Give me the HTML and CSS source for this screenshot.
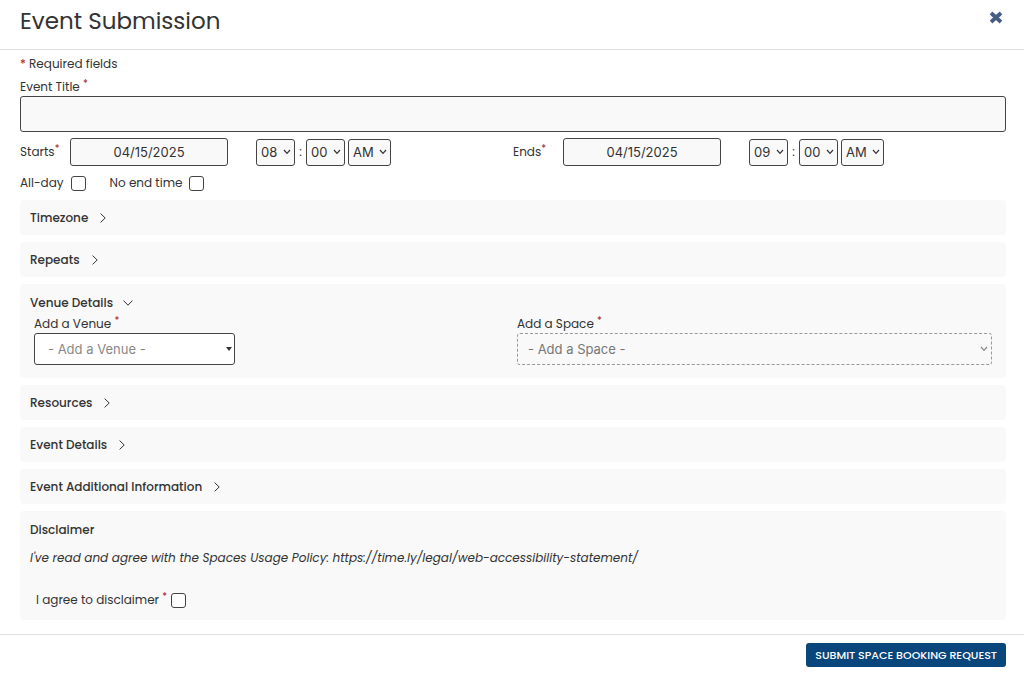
FILE: index.html
```html
<!doctype html>
<html lang="en">

<head>
	<meta charset="utf-8">
	<meta name="viewport" content="width=device-width, initial-scale=1">
	<title>Event Submission</title>
	<link rel="stylesheet" href="styles.css">
</head>

<body>
	<header class="header">
		<h1>Event Submission</h1>
		<button type="button" class="close" aria-label="Close">
			<svg width="12" height="12" viewBox="0 0 12 12"><path d="M2 2.4 L10 9.6 M10 2.4 L2 9.6" /></svg>
		</button>
	</header>

	<form class="form">
		<div class="content">
			<p class="required-note"><span class="star">*</span> Required fields</p>

			<label class="label title-label" for="title">Event Title <sup>*</sup></label>
			<input class="title-input" type="text" id="title" required>

			<!-- start and end date -->
			<div class="dates">
				<div class="date-row">
					<label class="label" for="start-date">Starts<sup>*</sup></label>
					<input class="date" type="text" id="start-date" value="04/15/2025">
					<div class="time">
						<div class="select">
							<select aria-label="Start hour"><option>08</option></select>
							<svg class="arrow" width="8" height="6" viewBox="0 0 8 6"><path d="M1 1 L4 4.3 L7 1" /></svg>
						</div>
						<span class="colon">:</span>
						<div class="select">
							<select aria-label="Start minute"><option>00</option></select>
							<svg class="arrow" width="8" height="6" viewBox="0 0 8 6"><path d="M1 1 L4 4.3 L7 1" /></svg>
						</div>
						<div class="select ampm">
							<select aria-label="Start AM or PM"><option>AM</option><option>PM</option></select>
							<svg class="arrow" width="8" height="6" viewBox="0 0 8 6"><path d="M1 1 L4 4.3 L7 1" /></svg>
						</div>
					</div>
				</div>
				<div class="date-row">
					<label class="label" for="end-date">Ends<sup>*</sup></label>
					<input class="date" type="text" id="end-date" value="04/15/2025">
					<div class="time">
						<div class="select">
							<select aria-label="End hour"><option>09</option></select>
							<svg class="arrow" width="8" height="6" viewBox="0 0 8 6"><path d="M1 1 L4 4.3 L7 1" /></svg>
						</div>
						<span class="colon">:</span>
						<div class="select">
							<select aria-label="End minute"><option>00</option></select>
							<svg class="arrow" width="8" height="6" viewBox="0 0 8 6"><path d="M1 1 L4 4.3 L7 1" /></svg>
						</div>
						<div class="select ampm">
							<select aria-label="End AM or PM"><option>AM</option><option>PM</option></select>
							<svg class="arrow" width="8" height="6" viewBox="0 0 8 6"><path d="M1 1 L4 4.3 L7 1" /></svg>
						</div>
					</div>
				</div>
			</div>

			<div class="checks">
				<div class="check">
					<label class="label" for="all-day">All-day</label>
					<input type="checkbox" id="all-day">
				</div>
				<div class="check">
					<label class="label" for="no-end">No end time</label>
					<input type="checkbox" id="no-end">
				</div>
			</div>

			<!-- collapsible sections -->
			<div class="panels">
				<section class="panel">
					<button type="button" class="toggle" aria-expanded="false">Timezone
						<svg width="6" height="10" viewBox="0 0 6 10"><path d="M.6 .6 L5.2 5 L.6 9.4" /></svg>
					</button>
				</section>
				<section class="panel">
					<button type="button" class="toggle" aria-expanded="false">Repeats
						<svg width="6" height="10" viewBox="0 0 6 10"><path d="M.6 .6 L5.2 5 L.6 9.4" /></svg>
					</button>
				</section>
				<section class="panel">
					<button type="button" class="toggle open" aria-expanded="true">Venue Details
						<svg width="10" height="6" viewBox="0 0 10 6"><path d="M.6 .6 L5 5.2 L9.4 .6" /></svg>
					</button>
					<div class="venue">
						<div>
							<label class="label" for="venue">Add a Venue <sup>*</sup></label>
							<div class="select venue-select">
								<select id="venue"><option>- Add a Venue -</option></select>
								<svg class="arrow" width="6" height="4" viewBox="0 0 6 4"><path d="M0 0 H6 L3 4 Z" /></svg>
							</div>
						</div>
						<div>
							<label class="label" for="space">Add a Space <sup>*</sup></label>
							<div class="select space-select">
								<select id="space" disabled><option>- Add a Space -</option></select>
								<svg class="arrow" width="8" height="6" viewBox="0 0 8 6"><path d="M1 1 L4 4.3 L7 1" /></svg>
							</div>
						</div>
					</div>
				</section>
				<section class="panel">
					<button type="button" class="toggle" aria-expanded="false">Resources
						<svg width="6" height="10" viewBox="0 0 6 10"><path d="M.6 .6 L5.2 5 L.6 9.4" /></svg>
					</button>
				</section>
				<section class="panel">
					<button type="button" class="toggle" aria-expanded="false">Event Details
						<svg width="6" height="10" viewBox="0 0 6 10"><path d="M.6 .6 L5.2 5 L.6 9.4" /></svg>
					</button>
				</section>
				<section class="panel">
					<button type="button" class="toggle" aria-expanded="false">Event Additional Information
						<svg width="6" height="10" viewBox="0 0 6 10"><path d="M.6 .6 L5.2 5 L.6 9.4" /></svg>
					</button>
				</section>
				<section class="panel">
					<h2>Disclaimer</h2>
					<p class="policy">I've read and agree with the Spaces Usage Policy: https://time.ly/legal/web-accessibility-statement/</p>
					<div class="agree">
						<label class="label" for="agree">I agree to disclaimer <sup>*</sup></label>
						<input type="checkbox" id="agree" required>
					</div>
				</section>
			</div>
		</div>

		<footer class="footer">
			<button type="submit" class="submit">SUBMIT SPACE BOOKING REQUEST</button>
		</footer>
	</form>
</body>

</html>
```
FILE: styles.css
```css
* {
	box-sizing: border-box;
}

body {
	margin: 0;
	background: #fff;
	color: #333;
	font-family: Poppins, Inter, sans-serif;
	font-size: 12px;
	line-height: 18px;
}

h1, h2, p {
	margin: 0;
}

button, input, select {
	font-family: inherit;
	color: inherit;
}

/* header */
.header {
	display: flex;
	justify-content: space-between;
	align-items: flex-start;
	height: 50px;
	padding: 5px 20px 0;
	border-bottom: 1px solid #ddd;
}

.header h1 {
	font-size: 23px;
	font-weight: 400;
	line-height: 32px;
}

.close {
	display: flex;
	margin-top: 5px;
	padding: 0;
	border: 0;
	background: none;
	cursor: pointer;
}

.close svg {
	width: 16px;
	height: 15px;
}

.close path {
	stroke: #455c85;
	stroke-width: 3;
}

svg path {
	fill: none;
	stroke: #333;
}

.content {
	padding: 5px 18px 14px 20px;
}

.star, sup {
	color: #a3142b;
}

sup {
	font-size: 10px;
	line-height: 0;
	vertical-align: 4px;
}

.label {
	white-space: nowrap;
}

.required-note {
	margin-bottom: 5px;
}

.title-label {
	display: block;
}

.title-input {
	display: block;
	width: 100%;
	height: 36px;
	padding: 0 10px;
	border: 1px solid #444;
	border-radius: 3px;
	background: #f9f9f9;
	font-size: 13px;
}

/* dates */
.dates {
	display: grid;
	grid-template-columns: 1fr 1fr;
	margin-top: 6px;
}

.date-row {
	display: flex;
	align-items: center;
}

.date-row .label {
	width: 50px;
}

.date {
	width: 158px;
	height: 28px;
	padding: 0;
	border: 1px solid #444;
	border-radius: 3px;
	background: #f9f9f9;
	font-family: Inter, sans-serif;
	font-size: 13px;
	text-align: center;
}

.time {
	display: flex;
	align-items: center;
	gap: 3px;
	margin-left: 28px;
}

.colon {
	width: 5px;
	text-align: center;
}

.select {
	position: relative;
	width: 39px;
}

.select select {
	display: block;
	width: 100%;
	height: 27px;
	padding: 0 4px;
	border: 1px solid #444;
	border-radius: 3px;
	background: #f9f9f9;
	font-family: Inter, sans-serif;
	font-size: 13px;
	appearance: none;
}

.ampm {
	width: 43px;
}

.arrow {
	position: absolute;
	top: 50%;
	right: 4px;
	transform: translateY(-50%);
	pointer-events: none;
}

.arrow path {
	stroke-width: 1.2;
}

/* check boxes */
.checks {
	display: flex;
	gap: 24px;
	margin-top: 8px;
}

.check, .agree {
	display: flex;
	align-items: center;
	gap: 7px;
}

input[type="checkbox"] {
	width: 15px;
	height: 15px;
	margin: 0;
	border: 1px solid #444;
	border-radius: 3px;
	background: #fff;
	appearance: none;
}

input[type="checkbox"]:checked {
	background: #08467c;
}

/* sections */
.panels {
	display: flex;
	flex-direction: column;
	gap: 7px;
	margin-top: 8px;
}

.panel {
	padding: 0 10px;
	border-radius: 4px;
	background: #f9f9f9;
}

.toggle {
	display: flex;
	align-items: center;
	gap: 12px;
	height: 35px;
	padding: 0;
	border: 0;
	background: none;
	font-size: 12px;
	font-weight: 500;
	cursor: pointer;
}

.open {
	gap: 10px;
	height: 30px;
	padding-top: 8px;
}

.venue {
	display: grid;
	grid-template-columns: 1fr 1fr;
	gap: 8px;
	padding: 0 4px 13px;
}

.venue .label {
	display: block;
	line-height: 19px;
}

.venue-select {
	width: 201px;
}

.venue-select select {
	height: 32px;
	padding: 0 13px;
	background: #fff;
	color: #888;
}

.venue-select .arrow {
	right: 3px;
}

.venue-select .arrow path {
	fill: #333;
	stroke: none;
}

.space-select {
	width: 100%;
}

.space-select select {
	height: 32px;
	padding: 0 10px;
	border: 1px dashed #999;
	color: #777;
	opacity: 1;
}

.space-select .arrow path {
	stroke: #888;
}

/* disclaimer */
h2 {
	padding-top: 10px;
	font-size: 12px;
	font-weight: 500;
}

.policy {
	margin-top: 10px;
	font-style: italic;
}

.agree {
	gap: 4px;
	margin-top: 24px;
	padding: 0 6px 11px;
}

.footer {
	display: flex;
	justify-content: flex-end;
	padding: 8px 18px 20px;
	border-top: 1px solid #ddd;
}

.submit {
	height: 24px;
	padding: 0 9px;
	border: 0;
	border-radius: 3px;
	background: #08467c;
	color: #fff;
	font-size: 11px;
	font-weight: 500;
	cursor: pointer;
}
```
